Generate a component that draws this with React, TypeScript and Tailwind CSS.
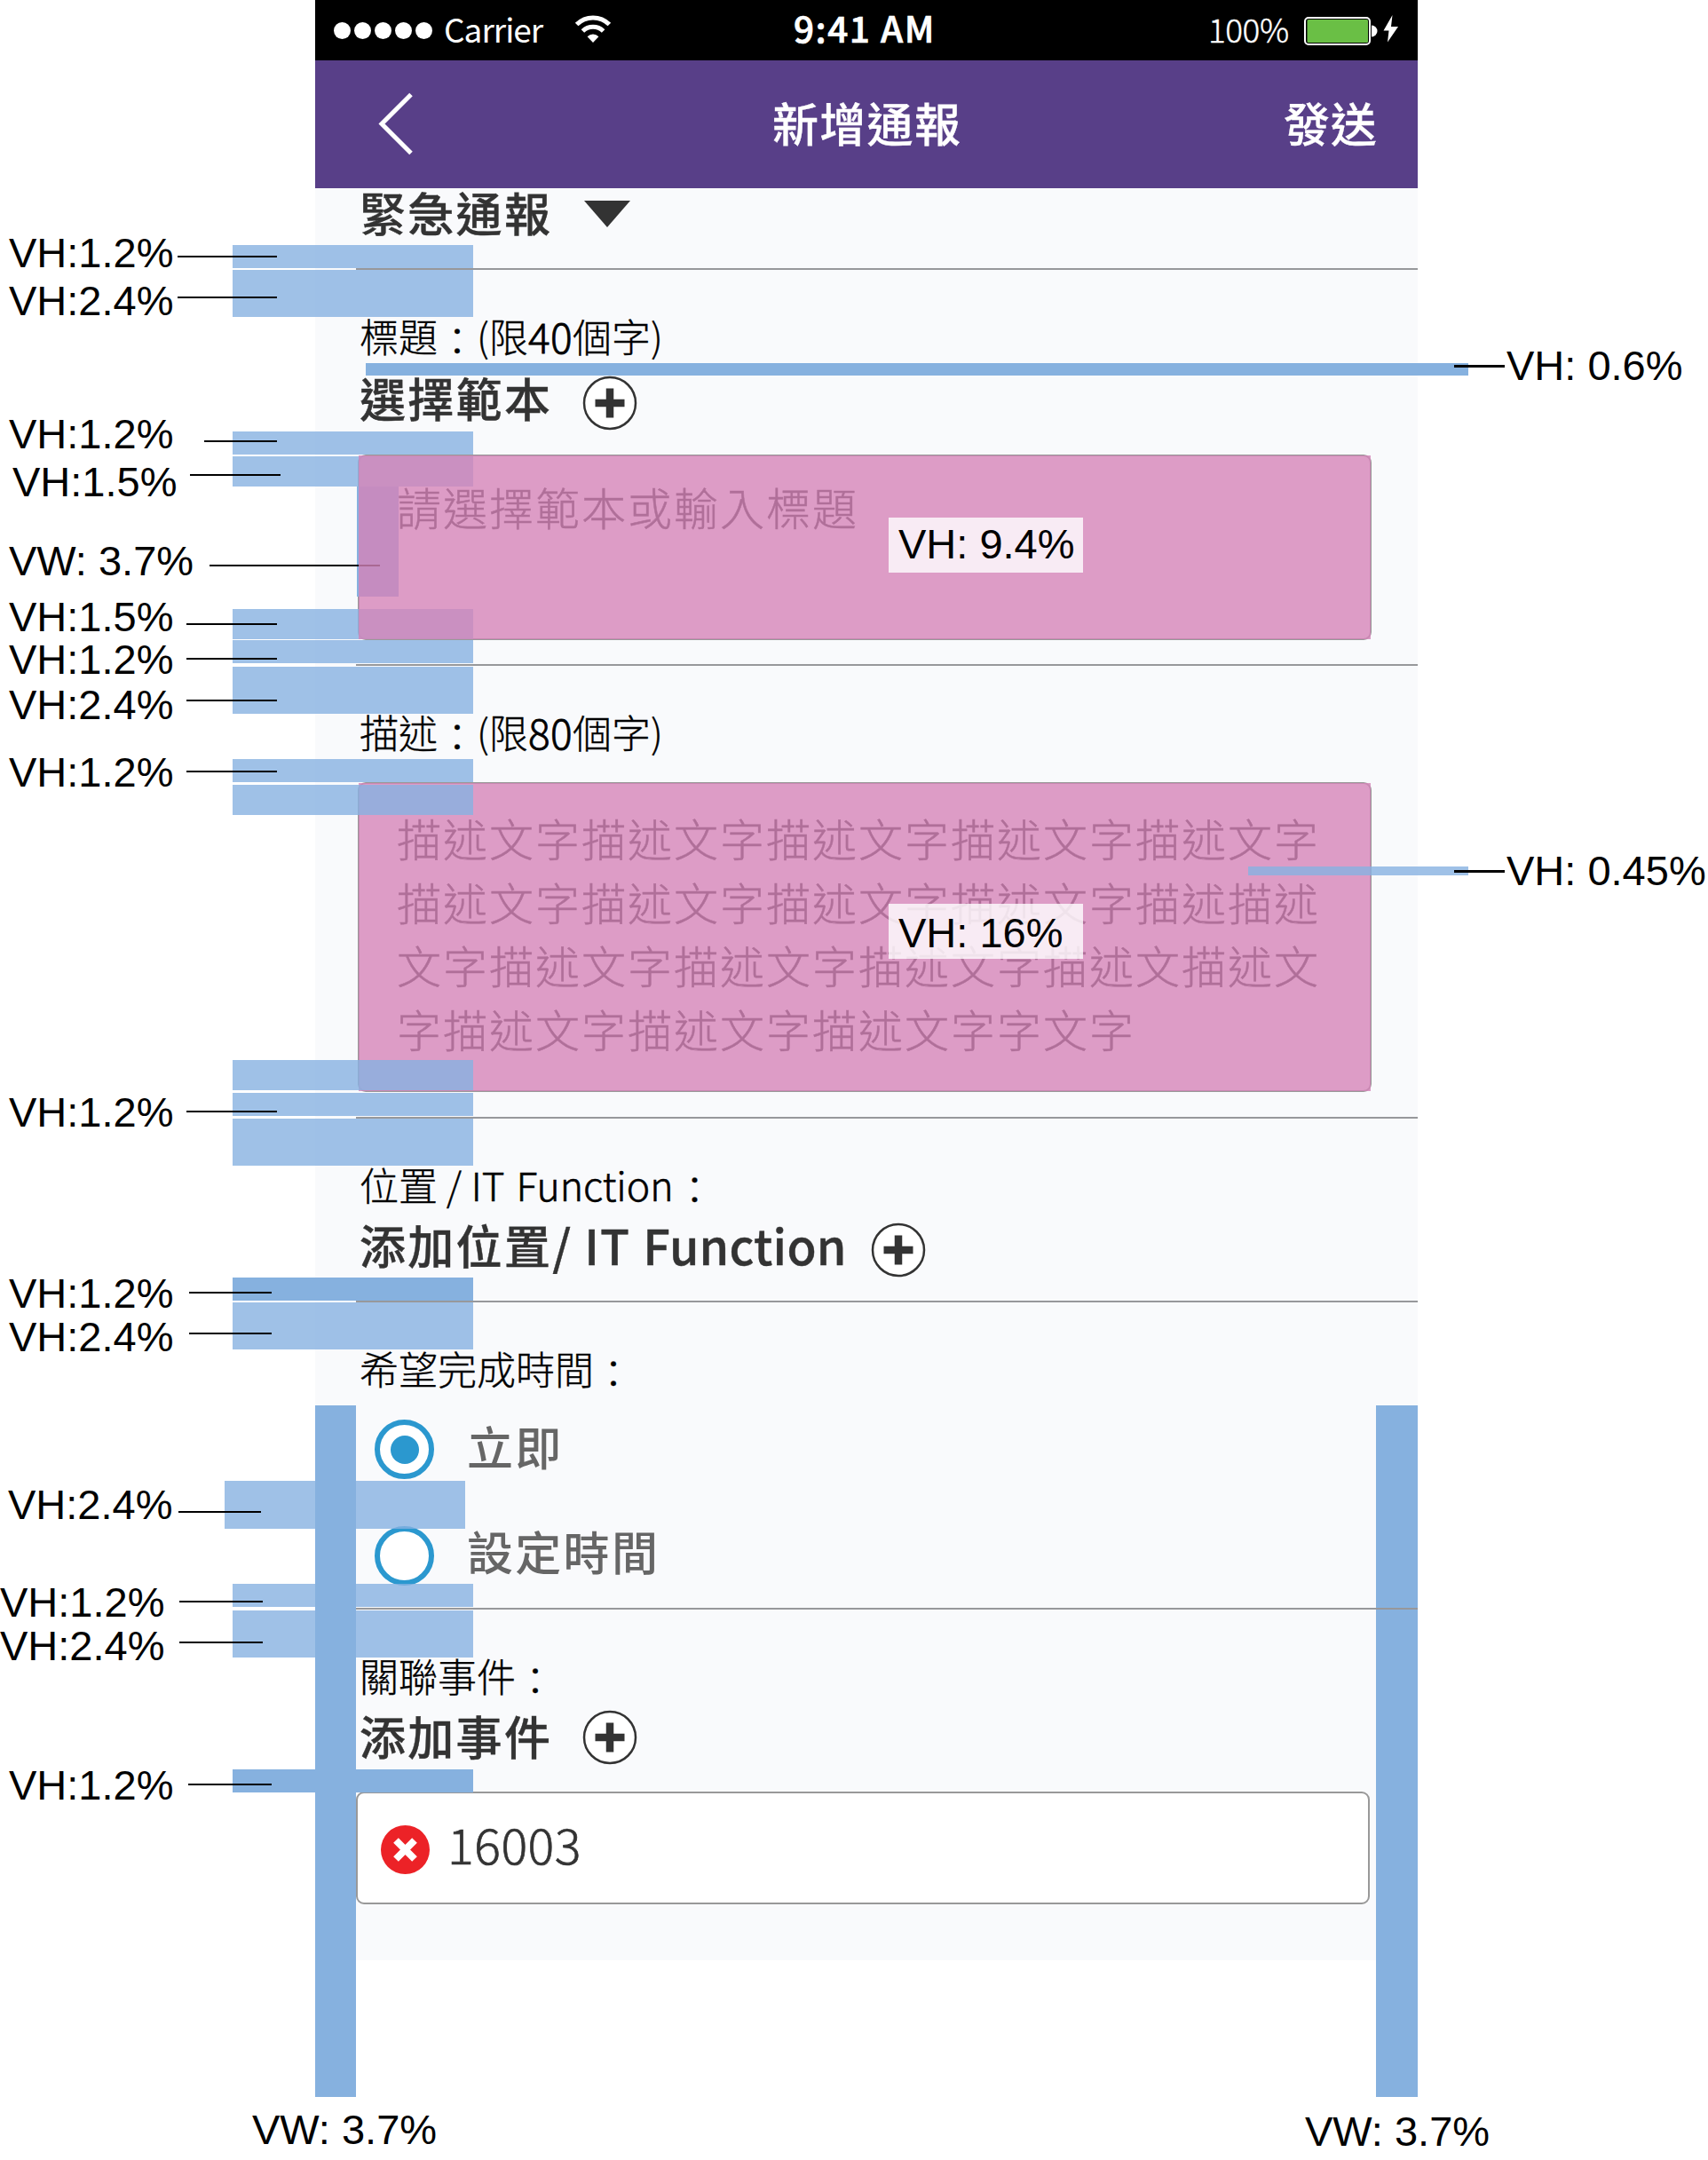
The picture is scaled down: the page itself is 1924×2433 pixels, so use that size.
import React from "react";

const CJK = "font-['Noto_Sans_CJK_TC',sans-serif]";

const HEADING =
  "text-[52px] font-medium leading-[52px] tracking-[2.3px] [-webkit-text-stroke:0.4px_currentColor]";

const OPTION = "text-[52px] font-medium leading-[52px] tracking-[2.3px] text-[#666]";

const PLACEHOLDER =
  "text-[50px] font-light tracking-[2px] text-[#222] [-webkit-text-stroke:0.5px_currentColor]";

/* ---------- phone mock-up ---------- */

function StatusBar() {
  return (
    <div className="flex h-[68px] items-center bg-black pl-[21px] text-white">
      <div className="flex gap-[4px]">
        {[0, 1, 2, 3, 4].map((i) => (
          <span key={i} className="h-[19px] w-[19px] rounded-full bg-white" />
        ))}
      </div>
      <span className="ml-[13px] w-[147px] text-[37px] leading-[60px] tracking-[-1px] -mt-[5px]">Carrier</span>
      <svg className="-mt-[2px] shrink-0" width="42" height="32" viewBox="0 0 42 32">
        <g fill="none" stroke="#fff" strokeWidth="5">
          <path d="M2.6 10.6A26 26 0 0 1 39.4 10.6" />
          <path d="M9.4 18A16.5 16.5 0 0 1 32.6 18" />
        </g>
        <path d="M21 31L14.6 24.2A9 9 0 0 1 27.4 24.2Z" fill="#fff" />
      </svg>
      <span className="ml-[205px] w-[164px] whitespace-nowrap text-[40.5px] font-medium leading-[60px] tracking-[1.5px] [-webkit-text-stroke:0.7px_currentColor] -mt-[6px]">
        9:41 AM
      </span>
      <span className="ml-[303px] w-[94px] text-[37px] font-light leading-[60px] tracking-[-0.5px] [-webkit-text-stroke:0.4px_currentColor] -mt-[5px]">
        100%
      </span>
      <svg className="ml-[13px] shrink-0" width="110" height="34" viewBox="0 0 110 34">
        <rect x="2" y="3" width="73" height="30" rx="4" fill="none" stroke="#fff" strokeWidth="2" />
        <rect x="4.500" y="5" width="68.500" height="26" rx="1.500" fill="#6abf45" />
        <path d="M77 11.500a6.500 6.500 0 0 1 0 13z" fill="#fff" />
        <path d="M100.500 0L90.500 17.500h6l-1.500 13L107 13h-8z" fill="#fff" />
      </svg>
    </div>
  );
}

function NavBar() {
  return (
    <div className="flex h-[144px] items-center bg-[#583f88] text-[52px] font-medium leading-[60px] tracking-[1.3px] text-white [-webkit-text-stroke:0.3px_currentColor]">
      <svg className="ml-[70px] shrink-0" width="42" height="76" viewBox="0 0 42 76">
        <path d="M38 4.500L5 37.500L38 70.500" fill="none" stroke="#fff" strokeWidth="5" />
      </svg>
      <span className="ml-[403px] -mt-[4px] w-[216px] whitespace-nowrap">新增通報</span>
      <span className="ml-[360px] -mt-[4px] whitespace-nowrap tracking-[0.8px]">發送</span>
    </div>
  );
}

function Label({ children }: { children: React.ReactNode }) {
  return (
    <div className="flex h-[44px] items-center whitespace-pre pl-[4px] pt-[2px] text-[44px] font-light leading-[44px] text-black [-webkit-text-stroke:0.35px_currentColor]">
      {children}
    </div>
  );
}

function Colon() {
  return <span className="pt-[8px]">：</span>;
}

function Digits({ children }: { children: React.ReactNode }) {
  return (
    <span className="text-[46px] tracking-[0.5px] [-webkit-text-stroke:0.8px_currentColor]">{children}</span>
  );
}

function PlusCircle() {
  return (
    <svg className="shrink-0" width="62" height="62" viewBox="0 0 62 62">
      <circle cx="31" cy="31" r="29" fill="#fff" stroke="#333" strokeWidth="2.500" />
      <path d="M14.500 31h33M31 14.500v33" stroke="#333" strokeWidth="8.500" />
    </svg>
  );
}

function Radio({ checked }: { checked?: boolean }) {
  return (
    <span className="ml-[21px] flex h-[67px] w-[67px] shrink-0 items-center justify-center rounded-full border-[6px] border-[#2b98cf] bg-white">
      {checked && <span className="h-[32px] w-[32px] rounded-full bg-[#2b98cf]" />}
    </span>
  );
}

function Phone() {
  return (
    <div className={`ml-[355px] w-[1242px] ${CJK}`}>
      <StatusBar />
      <NavBar />
      <main className="h-[1996px] bg-[#f9fafc] pl-[46px]">
        <section className="h-[92px] border-b-2 border-[#97989b]">
          <div className={`flex h-[54px] items-center pl-[4px] text-[#333] ${HEADING}`}>
            緊急通報
            <svg className="ml-[36px] mt-[4px]" width="52" height="30" viewBox="0 0 52 30">
              <path d="M0 0h52L26 30z" fill="#333" />
            </svg>
          </div>
        </section>

        <section className="h-[446px] border-b-2 border-[#97989b] pt-[51px]">
          <Label>
            標題
            <Colon />
            (限<Digits>40</Digits>個字)
          </Label>
          <div className="mt-[22px] flex h-[66px] items-center pl-[4px]">
            <span className={`-mt-[12px] w-[251px] text-[#333] ${HEADING}`}>選擇範本</span>
            <PlusCircle />
          </div>
          <div className={`ml-[2px] mt-[25px] h-[209px] w-[1142px] rounded-[9px] border-2 border-[#999] bg-white pl-[42px] pt-[28px] leading-[56px] ${PLACEHOLDER}`}>
            請選擇範本或輸入標題
          </div>
        </section>

        <section className="h-[510px] border-b-2 border-[#97989b] pt-[51px]">
          <Label>
            描述
            <Colon />
            (限<Digits>80</Digits>個字)
          </Label>
          <div className={`ml-[2px] mt-[36px] h-[349px] w-[1142px] rounded-[9px] border-2 border-[#999] bg-white pl-[42px] pt-[25px] leading-[71.6px] ${PLACEHOLDER}`}>
            <p className="whitespace-nowrap">描述文字描述文字描述文字描述文字描述文字</p>
            <p className="whitespace-nowrap">描述文字描述文字描述文字描述文字描述描述</p>
            <p className="whitespace-nowrap">文字描述文字描述文字描述文字描述文描述文</p>
            <p className="whitespace-nowrap">字描述文字描述文字描述文字字文字</p>
          </div>
        </section>

        <section className="h-[207px] border-b-2 border-[#97989b] pt-[51px]">
          <Label>
            位置 / <span className="ml-[1px] [-webkit-text-stroke:0.6px_currentColor]">IT</span>
            <span className="ml-[13px] text-[44.5px] [-webkit-text-stroke:0.6px_currentColor]">Function</span>
            <span className="ml-[2px] pt-[8px]">：</span>
          </Label>
          <div className="mt-[20px] flex h-[66px] items-center pl-[4px]">
            <div className={`-mt-[13px] flex w-[576px] whitespace-nowrap text-[#333] ${HEADING}`}>
              添加位置
              <span className="w-[36px] text-[54px]">/</span>
              <span className="w-[66px] text-[54px] tracking-[1px]">IT</span>
              <span className="text-[54px] tracking-[0.2px]">Function</span>
            </div>
            <PlusCircle />
          </div>
        </section>

        <section className="h-[346px] border-b-2 border-[#97989b] pt-[51px]">
          <Label>
            希望完成時間
            <Colon />
          </Label>
          <div className={`mt-[37px] flex h-[67px] items-center ${OPTION}`}>
            <Radio checked />
            <span className="-mt-[8px] ml-[37px]">立即</span>
          </div>
          <div className={`mt-[53px] flex h-[67px] items-center ${OPTION}`}>
            <Radio />
            <span className="-mt-[12px] ml-[37px]">設定時間</span>
          </div>
        </section>

        <section className="pt-[51px]">
          <Label>
            關聯事件
            <Colon />
          </Label>
          <div className="mt-[16px] flex h-[66px] items-center pl-[4px]">
            <span className={`-mt-[5px] w-[251px] text-[#333] ${HEADING}`}>添加事件</span>
            <PlusCircle />
          </div>
          <div className="mt-[28px] flex h-[127px] w-[1142px] items-center rounded-[9px] border-2 border-[#999] bg-white pl-[26px]">
            <svg className="mt-[4px]" width="55" height="55" viewBox="0 0 55 55">
              <circle cx="27.500" cy="27.500" r="27.500" fill="#ec2227" />
              <path d="M17 17l21 21M38 17l-21 21" stroke="#fff" strokeWidth="8" />
            </svg>
            <span className="-mt-[11px] ml-[20px] text-[55.5px] font-light leading-[60px] tracking-[0.5px] text-[#333] [-webkit-text-stroke:0.7px_currentColor]">
              16003
            </span>
          </div>
        </section>
      </main>
    </div>
  );
}

/* ---------- spacing annotations laid over the mock-up ---------- */

const LIGHT = "bg-[#87b1e1]/80";
const DARK = "bg-[#86b1df]";

const barsBelow = [
  "left-[262px] top-[276px] w-[271px] h-[26px] bg-[#87b1e1]/80",
  "left-[262px] top-[304px] w-[271px] h-[53px] bg-[#87b1e1]/80",
  "left-[412px] top-[409px] w-[1242px] h-[14px] bg-[#86b1df]",
  "left-[262px] top-[486px] w-[271px] h-[26px] bg-[#87b1e1]/80",
  "left-[262px] top-[514px] w-[271px] h-[34px] bg-[#87b1e1]/80",
  "left-[402px] top-[548px] w-[47px] h-[124px] bg-[#86b1df]",
  "left-[262px] top-[686px] w-[271px] h-[34px] bg-[#87b1e1]/80",
  "left-[262px] top-[721px] w-[271px] h-[26px] bg-[#87b1e1]/80",
  "left-[262px] top-[751px] w-[271px] h-[53px] bg-[#87b1e1]/80",
];

const barsAbove = [
  "left-[262px] top-[855px] w-[271px] h-[26px]",
  "left-[262px] top-[884px] w-[271px] h-[34px]",
  "left-[1406px] top-[976px] w-[248px] h-[10px]",
  "left-[262px] top-[1194px] w-[271px] h-[34px]",
  "left-[262px] top-[1231px] w-[271px] h-[26px]",
  "left-[262px] top-[1260px] w-[271px] h-[53px]",
  "left-[262px] top-[1467px] w-[271px] h-[53px]",
  "left-[253px] top-[1668px] w-[271px] h-[54px]",
  "left-[262px] top-[1784px] w-[271px] h-[26px]",
  "left-[262px] top-[1814px] w-[271px] h-[53px]",
];

const solidBars = [
  "left-[262px] top-[1439px] w-[271px] h-[26px]",
  "left-[262px] top-[1993px] w-[271px] h-[26px]",
  "left-[355px] top-[1583px] w-[46px] h-[779px]",
  "left-[1550px] top-[1583px] w-[47px] h-[779px]",
];

const leaders = [
  "left-[200px] top-[288px] w-[112px] h-[2px]",
  "left-[200px] top-[334px] w-[112px] h-[2px]",
  "left-[230px] top-[496px] w-[82px] h-[2px]",
  "left-[214px] top-[534px] w-[102px] h-[2px]",
  "left-[210px] top-[702px] w-[102px] h-[2px]",
  "left-[210px] top-[741px] w-[102px] h-[2px]",
  "left-[210px] top-[788px] w-[102px] h-[2px]",
  "left-[210px] top-[868px] w-[102px] h-[2px]",
  "left-[210px] top-[1251px] w-[102px] h-[2px]",
  "left-[213px] top-[1455px] w-[93px] h-[2px]",
  "left-[213px] top-[1501px] w-[93px] h-[2px]",
  "left-[201px] top-[1702px] w-[93px] h-[2px]",
  "left-[202px] top-[1803px] w-[94px] h-[2px]",
  "left-[202px] top-[1849px] w-[94px] h-[2px]",
  "left-[212px] top-[2009px] w-[94px] h-[2px]",
  "left-[1638px] top-[411px] w-[57px] h-[3px]",
  "left-[1638px] top-[980px] w-[57px] h-[3px]",
];

const notes: [string, string][] = [
  ["left-[10px] top-[262px]", "VH:1.2%"],
  ["left-[10px] top-[316px]", "VH:2.4%"],
  ["left-[10px] top-[466px]", "VH:1.2%"],
  ["left-[14px] top-[520px]", "VH:1.5%"],
  ["left-[10px] top-[609px]", "VW: 3.7%"],
  ["left-[10px] top-[672px]", "VH:1.5%"],
  ["left-[10px] top-[720px]", "VH:1.2%"],
  ["left-[10px] top-[771px]", "VH:2.4%"],
  ["left-[10px] top-[847px]", "VH:1.2%"],
  ["left-[10px] top-[1230px]", "VH:1.2%"],
  ["left-[10px] top-[1434px]", "VH:1.2%"],
  ["left-[10px] top-[1483px]", "VH:2.4%"],
  ["left-[9px] top-[1672px]", "VH:2.4%"],
  ["left-[0px] top-[1782px]", "VH:1.2%"],
  ["left-[0px] top-[1831px]", "VH:2.4%"],
  ["left-[10px] top-[1988px]", "VH:1.2%"],
  ["left-[284px] top-[2376px]", "VW: 3.7%"],
  ["left-[1470px] top-[2378px]", "VW: 3.7%"],
  ["left-[1697px] top-[389px]", "VH: 0.6%"],
  ["left-[1697px] top-[958px]", "VH: 0.45%"],
];

function Annotations() {
  return (
    <div className="absolute inset-0 whitespace-nowrap font-['Liberation_Sans',Arial,sans-serif] text-[47px] leading-[46px] text-black">
      {barsBelow.map((c) => (
        <div key={c} className={`absolute ${c}`} />
      ))}
      <div className="absolute left-[236px] top-[636px] h-[2px] w-[192px] bg-black" />
      <div className="absolute left-[404px] top-[513px] h-[207px] w-[1140px] bg-[#d483b8]/80" />
      <div className="absolute left-[404px] top-[882px] h-[347px] w-[1140px] bg-[#d483b8]/80" />
      {barsAbove.map((c) => (
        <div key={c} className={`absolute ${LIGHT} ${c}`} />
      ))}
      {solidBars.map((c) => (
        <div key={c} className={`absolute ${DARK} ${c}`} />
      ))}
      <div className="absolute left-[1550px] top-[1811px] h-[2px] w-[47px] bg-[#97989b]" />
      {leaders.map((c) => (
        <div key={c} className={`absolute bg-black ${c}`} />
      ))}
      <div className="absolute left-[1001px] top-[583px] h-[62px] w-[219px] bg-white/80 pl-[11px] pt-[7px]">VH: 9.4%</div>
      <div className="absolute left-[1001px] top-[1018px] h-[62px] w-[219px] bg-white/80 pl-[11px] pt-[10px]">VH: 16%</div>
      {notes.map(([c, t]) => (
        <span key={c} className={`absolute ${c}`}>
          {t}
        </span>
      ))}
    </div>
  );
}

export default function App() {
  return (
    <div className="relative h-[2433px] w-[1924px] overflow-hidden bg-white">
      <Phone />
      <Annotations />
    </div>
  );
}
